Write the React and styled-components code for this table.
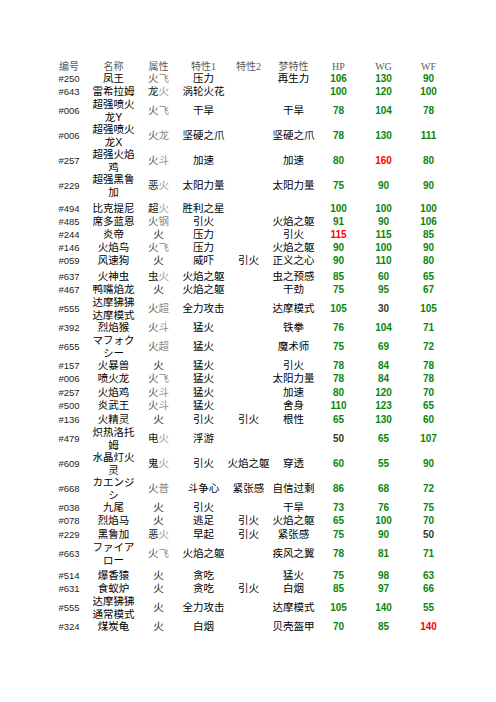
import React from "react";
import styled, { createGlobalStyle } from "styled-components";

const GlobalStyle = createGlobalStyle`
  body {
    margin: 0;
    background: #fff;
    font-family: "Liberation Sans", "Noto Sans CJK SC", sans-serif;
  }
`;

const COLS = "44px repeat(8, 45px)";

const Page = styled.div`
  width: 496px;
  height: 702px;
  padding: 61px 0 0 47px;
  box-sizing: border-box;
`;

const HeaderRow = styled.div`
  display: grid;
  grid-template-columns: ${COLS};
  height: 11px;
  align-items: center;
`;

const HeaderCell = styled.div`
  text-align: center;
  font-family: "Liberation Serif", "Noto Sans CJK SC", serif;
  font-size: 10px;
  line-height: 11px;
  color: #5a5a5a;
`;

const Row = styled.div`
  display: grid;
  grid-template-columns: ${COLS};
  align-items: center;
  margin-top: ${({ $gap }) => $gap || 0}px;
  height: ${({ $lines }) => ($lines > 1 ? 25 : 13)}px;
`;

const IdCell = styled.div`
  text-align: center;
  font-size: 9.5px;
  line-height: 13px;
  color: #1e1e1e;
`;

const TextCell = styled.div`
  text-align: center;
  font-size: 10.5px;
  line-height: ${({ $lines }) => ($lines > 1 ? 12.5 : 13)}px;
  color: #000;
  white-space: nowrap;
`;

const AttrChar = styled.span`
  color: ${({ $tone }) => $tone};
`;

const NumCell = styled.div`
  text-align: center;
  font-size: 10px;
  font-weight: bold;
  line-height: 13px;
  color: ${({ $tone }) =>
    $tone === "red" ? "#ff0000" : $tone === "dark" ? "#3a3a1c" : "#0a860a"};
`;

// [id, name lines, attr, 特性1, 特性2, 梦特性, hp, wg, wf, gap]
// a number written as "r115" is red, "d30" is dark
const rows = [
  ["#250", ["凤王"], "火飞", "压力", "", "再生力", "106", "130", "90", 0],
  ["#643", ["雷希拉姆"], "龙火", "涡轮火花", "", "", "100", "120", "100", 0],
  ["#006", ["超强喷火", "龙Y"], "火飞", "干旱", "", "干旱", "78", "104", "78", 0],
  ["#006", ["超强喷火", "龙X"], "火龙", "坚硬之爪", "", "坚硬之爪", "78", "130", "111", 0],
  ["#257", ["超强火焰", "鸡"], "火斗", "加速", "", "加速", "80", "r160", "80", 0],
  ["#229", ["超强黑鲁", "加"], "恶火", "太阳力量", "", "太阳力量", "75", "90", "90", 0],
  ["#494", ["比克提尼"], "超火", "胜利之星", "", "", "100", "100", "100", 4],
  ["#485", ["席多蓝恩"], "火钢", "引火", "", "火焰之躯", "91", "90", "106", 0],
  ["#244", ["炎帝"], "火", "压力", "", "引火", "r115", "115", "85", 0],
  ["#146", ["火焰鸟"], "火飞", "压力", "", "火焰之躯", "90", "100", "90", 0],
  ["#059", ["风速狗"], "火", "威吓", "引火", "正义之心", "90", "110", "80", 0],
  ["#637", ["火神虫"], "虫火", "火焰之躯", "", "虫之预感", "85", "60", "65", 3],
  ["#467", ["鸭嘴焰龙"], "火", "火焰之躯", "", "干劲", "75", "95", "67", 0],
  ["#555", ["达摩狒狒", "达摩模式"], "火超", "全力攻击", "", "达摩模式", "105", "d30", "105", 0],
  ["#392", ["烈焰猴"], "火斗", "猛火", "", "铁拳", "76", "104", "71", 0],
  ["#655", ["マフォク", "シー"], "火超", "猛火", "", "魔术师", "75", "69", "72", 0],
  ["#157", ["火暴兽"], "火", "猛火", "", "引火", "78", "84", "78", 0],
  ["#006", ["喷火龙"], "火飞", "猛火", "", "太阳力量", "78", "84", "78", 0],
  ["#257", ["火焰鸡"], "火斗", "猛火", "", "加速", "80", "120", "70", 1],
  ["#500", ["炎武王"], "火斗", "猛火", "", "舍身", "110", "123", "65", 0],
  ["#136", ["火精灵"], "火", "引火", "引火", "根性", "65", "130", "60", 1],
  ["#479", ["炽热洛托", "姆"], "电火", "浮游", "", "", "d50", "65", "107", 0],
  ["#609", ["水晶灯火", "灵"], "鬼火", "引火", "火焰之躯", "穿透", "60", "55", "90", 0],
  ["#668", ["カエンジ", "シ"], "火普", "斗争心", "紧张感", "自信过剩", "86", "68", "72", 0],
  ["#038", ["九尾"], "火", "引火", "", "干旱", "73", "76", "75", 0],
  ["#078", ["烈焰马"], "火", "逃足", "引火", "火焰之躯", "65", "100", "70", 0],
  ["#229", ["黑鲁加"], "恶火", "早起", "引火", "紧张感", "75", "90", "d50", 1],
  ["#663", ["ファイア", "ロー"], "火飞", "火焰之躯", "", "疾风之翼", "78", "81", "71", 0],
  ["#514", ["爆香猿"], "火", "贪吃", "", "猛火", "75", "98", "63", 3],
  ["#631", ["食蚁炉"], "火", "贪吃", "引火", "白烟", "85", "97", "66", 0],
  ["#555", ["达摩狒狒", "通常模式"], "火", "全力攻击", "", "达摩模式", "105", "140", "55", 0],
  ["#324", ["煤炭龟"], "火", "白烟", "", "贝壳盔甲", "70", "85", "r140", 0],
];

const headers = ["编号", "名称", "属性", "特性1", "特性2", "梦特性", "HP", "WG", "WF"];

const attrTones = (attr) => {
  if (attr.length === 1) return ["#1a1a1a"];
  if (attr[1] === "火") return ["#111", "#9a9a9a"];
  return ["#555", "#8a8a8a"];
};

const Attr = ({ value }) => {
  const tones = attrTones(value);
  return (
    <TextCell>
      {value.split("").map((ch, i) => (
        <AttrChar key={i} $tone={tones[i]}>
          {ch}
        </AttrChar>
      ))}
    </TextCell>
  );
};

const Num = ({ value }) => {
  const tone = value[0] === "r" ? "red" : value[0] === "d" ? "dark" : "green";
  const text = tone === "green" ? value : value.slice(1);
  return <NumCell $tone={tone}>{text}</NumCell>;
};

const App = () => (
  <Page>
    <GlobalStyle />
    <HeaderRow>
      {headers.map((h) => (
        <HeaderCell key={h}>{h}</HeaderCell>
      ))}
    </HeaderRow>
    {rows.map(([id, name, attr, t1, t2, dream, hp, wg, wf, gap], i) => (
      <Row key={i} $lines={name.length} $gap={gap}>
        <IdCell>{id}</IdCell>
        <TextCell $lines={name.length}>
          {name.map((line, j) => (
            <div key={j}>{line}</div>
          ))}
        </TextCell>
        <Attr value={attr} />
        <TextCell>{t1}</TextCell>
        <TextCell>{t2}</TextCell>
        <TextCell>{dream}</TextCell>
        <Num value={hp} />
        <Num value={wg} />
        <Num value={wf} />
      </Row>
    ))}
  </Page>
);

export default App;
